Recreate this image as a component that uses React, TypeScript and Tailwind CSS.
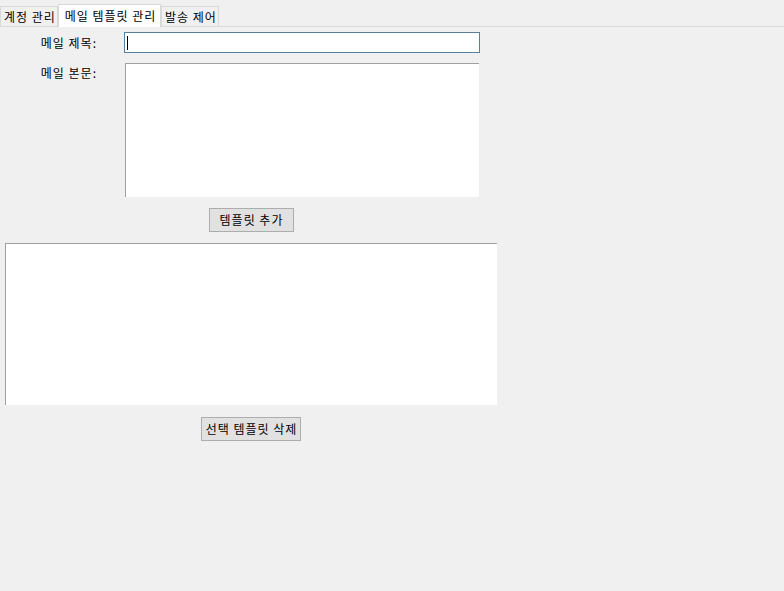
const font = { fontFamily: '"Noto Sans CJK KR", "Noto Sans", sans-serif' };

function Tab({ label, active }: { label: string; active?: boolean }) {
  if (active) {
    return (
      <div className="flex h-[23px] w-[103px] -mb-px items-center justify-center border border-b-0 border-[#d9d9d9] bg-white pl-[2px] text-[12px] leading-none tracking-[1px]">
        {label}
      </div>
    );
  }
  return (
    <div className="flex h-[20px] w-[58px] items-center justify-center border border-b-0 border-[#d9d9d9] bg-[#f0f0f0] pl-[2px] text-[12px] leading-none tracking-[1px]">
      {label}
    </div>
  );
}

function Button({ label, width }: { label: string; width: string }) {
  return (
    <button
      className={`flex h-[24px] ${width} items-center justify-center border border-[#adadad] bg-[#e1e1e1] pl-px text-[12px] leading-none tracking-[1px] text-black`}
    >
      {label}
    </button>
  );
}

export default function App() {
  return (
    <div className="h-[591px] w-[784px] overflow-hidden bg-[#f0f0f0] text-black" style={font}>
      <div className="flex h-[27px] items-end border-b border-[#d9d9d9] pt-[4px]">
        <Tab label="계정 관리" />
        <Tab label="메일 템플릿 관리" active />
        <Tab label="발송 제어" />
      </div>

      <div className="flex w-[502px] flex-col items-center">
        <div className="grid w-full grid-cols-[124px_356px] gap-y-[10px] pt-[5px]">
          <div className="flex items-center justify-end pr-[27px] text-[12px] tracking-[1px]">메일 제목:</div>
          <div className="relative h-[21px] border border-[#5a7f9c] bg-white">
            <div className="absolute left-[2px] top-[3px] h-[14px] w-px bg-black" />
          </div>

          <div className="pr-[27px] pt-[1px] text-right text-[12px] tracking-[1px]">메일 본문:</div>
          <div className="ml-px h-[134px] w-[354px] border-l border-t border-[#a0a0a0] bg-white" />
        </div>

        <div className="mt-[11px]">
          <Button label="템플릿 추가" width="w-[85px]" />
        </div>

        <div className="mt-[11px] h-[162px] w-[492px] border-l border-t border-[#a0a0a0] bg-white" />

        <div className="mt-[12px]">
          <Button label="선택 템플릿 삭제" width="w-[100px]" />
        </div>
      </div>
    </div>
  );
}
